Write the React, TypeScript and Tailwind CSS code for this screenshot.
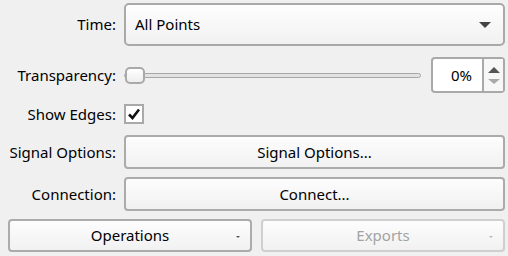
import React from 'react';

const font = { fontFamily: '"Noto Sans", "Open Sans", sans-serif' };

function Label({ children }: { children: React.ReactNode }) {
    return <div className="w-[109px] shrink-0 pr-[1px] text-right">{children}</div>;
}

function PushButton({ children, disabled, menu }: { children: React.ReactNode; disabled?: boolean; menu?: boolean }) {
    return (
        <div
            className={
                'relative flex h-full flex-1 items-center justify-center rounded-[4px] border-2 bg-gradient-to-b from-[#fdfdfd] to-[#f1f1f1] ' +
                (disabled ? 'border-[#cfcfcf] text-[#a3a3a3]' : 'border-[#ababab] text-black')
            }
        >
            {children}
            {menu && (
                <span
                    className={
                        'absolute right-[10px] top-[15px] h-0 w-0 border-x-[2px] border-t-[2px] border-x-transparent ' +
                        (disabled ? 'border-t-[#b8b8b8]' : 'border-t-[#555]')
                    }
                />
            )}
        </div>
    );
}

export default function App() {
    return (
        <div className="h-[256px] w-[508px] bg-[#f0f0f0] pl-2 pr-[3px] pt-[3px] text-[15px] text-black" style={font}>
            <div className="flex h-[43px] items-center gap-[7px]">
                <Label>Time:</Label>
                <div className="relative flex h-full flex-1 items-center rounded-[5px] border-2 border-[#a9a9a9] bg-gradient-to-b from-[#fefefe] to-[#f1f1f1] pl-[9px]">
                    All Points
                    <span className="absolute right-[12px] top-[17px] h-0 w-0 border-x-[6px] border-t-[6px] border-x-transparent border-t-[#444]" />
                </div>
            </div>

            <div className="mt-[11px] flex h-[36px] items-center gap-[7px]">
                <Label>Transparency:</Label>
                <div className="relative flex h-full flex-1 items-center">
                    <div className="h-[5px] flex-1 rounded-full border border-[#a8a8a8] bg-[#e2e2e2]" />
                    <div className="absolute left-[1px] top-[10px] h-[17px] w-[20px] rounded-[5px] border-2 border-[#a9a9a9] bg-gradient-to-b from-[#ffffff] to-[#eeeeee]" />
                    <div className="ml-[10px] flex h-full w-[74px] items-stretch rounded-[4px] border-2 border-[#a9a9a9] bg-white">
                        <div className="flex flex-1 items-center justify-end pr-[10px]">0%</div>
                        <div className="w-[2px] bg-[#a9a9a9]" />
                        <div className="flex w-[19px] flex-col items-center justify-center gap-[6px] bg-[#f7f7f7]">
                            <span className="h-0 w-0 border-x-[6px] border-b-[6px] border-x-transparent border-b-[#555]" />
                            <span className="h-0 w-0 border-x-[6px] border-t-[5px] border-x-transparent border-t-[#a9a9a9]" />
                        </div>
                    </div>
                </div>
            </div>

            <div className="mt-[11px] flex h-[20px] items-center gap-[7px]">
                <Label>Show Edges:</Label>
                <div className="flex h-[20px] w-[20px] items-center justify-center border-2 border-[#a9a9a9] bg-white">
                    <svg width="14" height="14" viewBox="0 0 14 14">
                        <path d="M2 7.5 L5.5 11 L12 2.5" fill="none" stroke="#111" strokeWidth="2.6" />
                    </svg>
                </div>
            </div>

            <div className="mt-[11px] flex h-[34px] items-center gap-[7px]">
                <Label>Signal Options:</Label>
                <PushButton>Signal Options...</PushButton>
            </div>

            <div className="mt-[8px] flex h-[34px] items-center gap-[7px]">
                <Label>Connection:</Label>
                <PushButton>Connect...</PushButton>
            </div>

            <div className="mt-[8px] flex h-[33px] gap-[9px]">
                <PushButton menu>Operations</PushButton>
                <PushButton menu disabled>
                    Exports
                </PushButton>
            </div>
        </div>
    );
}
